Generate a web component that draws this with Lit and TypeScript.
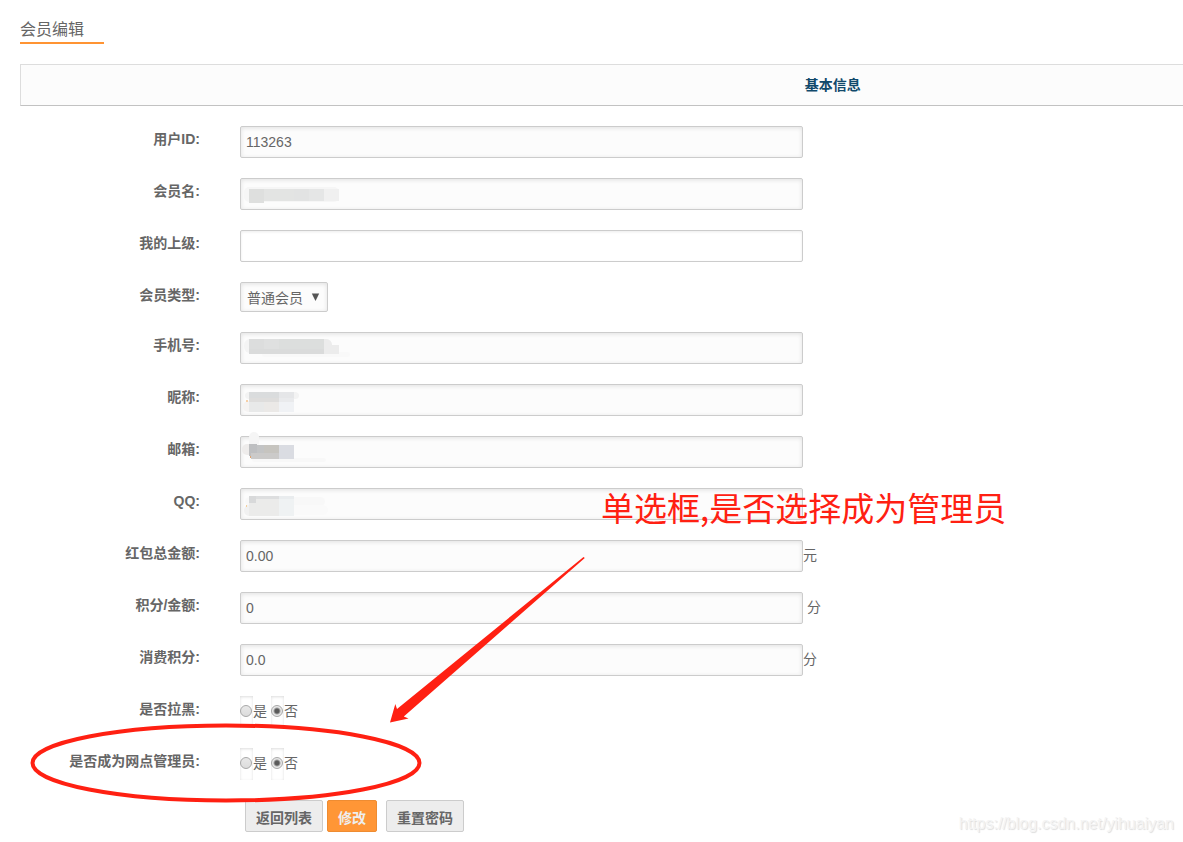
import { LitElement, html, svg, css, nothing, TemplateResult } from "lit";
import { customElement, property } from "lit/decorators.js";

type Block = [x: number, y: number, w: number, h: number, fill: string, r?: number];

interface TextRow {
  kind: "text";
  id: string;
  label: string;
  value?: string;
  editable?: boolean;
  unit?: string;
  spaced?: boolean;
  mask?: Block[];
}
interface SelectRow {
  kind: "select";
  id: string;
  label: string;
  options: string[];
}
interface RadioRow {
  kind: "radio";
  id: string;
  label: string;
}
type Row = TextRow | SelectRow | RadioRow;

/* Privacy mosaics laid over personal values. */
const NAME_MASK: Block[] = [
  [4, 9, 95, 15, "#f6f6f6", 5],
  [9, 11, 15, 14, "#dedfde"],
  [24, 11, 30, 12, "#e3e4e3"],
  [54, 11, 15, 12, "#e2e3e3"],
  [69, 11, 15, 12, "#e5e6e6"],
  [84, 11, 15, 12, "#f0f0f0"],
];
const PHONE_MASK: Block[] = [
  [4, 7, 88, 14, "#f4f4f4", 6],
  [22, 20, 88, 5, "#f9f9f9", 2],
  [70, 7, 22, 14, "#ececec", 6],
  [84, 13, 15, 9, "#ececec"],
  [9, 7, 15, 10, "#dcdddd"],
  [24, 7, 15, 10, "#dfe0e0"],
  [39, 7, 45, 10, "#dcdedd"],
  [9, 17, 75, 5, "#dadbdb"],
];
const NICK_MASK: Block[] = [
  [5, 8, 54, 7, "#f3f3f3", 4],
  [3, 17, 14, 11, "#f5f3f2", 5],
  [6, 16, 2, 2, "#f6cfa6"],
  [9, 8, 30, 6, "#dadcdd"],
  [39, 8, 15, 6, "#e5e6e8"],
  [9, 14, 30, 4, "#dedddc"],
  [39, 14, 15, 4, "#e9eaec"],
  [9, 18, 15, 10, "#e8e9e9"],
  [24, 18, 15, 10, "#ebe9e7"],
  [39, 18, 15, 10, "#f0f2f5"],
];
const MAIL_MASK: Block[] = [
  [9, -4, 10, 16, "#f5f5f5", 5],
  [2, 8, 14, 11, "#eeeceb", 5],
  [12, 22, 74, 4, "#f8f8f8", 2],
  [9, 8, 8, 12, "#bebfc1"],
  [17, 9, 7, 14, "#c3c4c5"],
  [24, 9, 15, 14, "#c6c4bf"],
  [11, 17, 28, 6, "#cbcac9"],
  [39, 9, 15, 14, "#dadce2"],
  [10, 20, 1, 2, "#dfa673"],
];
const QQ_MASK: Block[] = [
  [5, 9, 80, 9, "#f8f8f8", 5],
  [4, 17, 84, 10, "#fafafa", 5],
  [4, 17, 14, 11, "#f1f1f1", 5],
  [6, 17, 1, 2, "#f5cf9c"],
  [9, 8, 30, 20, "#ebebea"],
  [9, 8, 30, 3, "#dddedf"],
  [9, 8, 7, 7, "#d8d9da"],
  [39, 8, 15, 20, "#eff2f3"],
  [39, 8, 15, 3, "#e9ecee"],
];

const ROWS: Row[] = [
  { kind: "text", id: "uid", label: "用户ID:", value: "113263" },
  { kind: "text", id: "name", label: "会员名:", mask: NAME_MASK },
  { kind: "text", id: "parent", label: "我的上级:", editable: true },
  { kind: "select", id: "type", label: "会员类型:", options: ["普通会员"] },
  { kind: "text", id: "phone", label: "手机号:", mask: PHONE_MASK },
  { kind: "text", id: "nick", label: "昵称:", mask: NICK_MASK },
  { kind: "text", id: "mail", label: "邮箱:", mask: MAIL_MASK },
  { kind: "text", id: "qq", label: "QQ:", mask: QQ_MASK },
  { kind: "text", id: "bonus", label: "红包总金额:", value: "0.00", unit: "元" },
  { kind: "text", id: "points", label: "积分/金额:", value: "0", unit: "分", spaced: true },
  { kind: "text", id: "spent", label: "消费积分:", value: "0.0", unit: "分" },
  { kind: "radio", id: "blocked", label: "是否拉黑:" },
  { kind: "radio", id: "manager", label: "是否成为网点管理员:" },
];

@customElement("member-row")
class MemberRow extends LitElement {
  @property({ attribute: false }) row!: Row;

  static styles = css`
    :host {
      display: grid;
      grid-template-columns: 200px minmax(0, 1fr);
      column-gap: 40px;
      align-items: start;
      color: #666;
      font-size: 14px;
    }
    .label {
      text-align: right;
      font-weight: bold;
      line-height: 26px;
    }
    .line {
      display: flex;
      align-items: center;
    }
    .field {
      position: relative;
      flex: 0 1 563px;
      min-width: 0;
      display: flex;
    }
    .text,
    .select {
      box-sizing: border-box;
      margin: 0;
      border: 1px solid #ccc;
      border-radius: 2px;
      font: inherit;
      color: #666;
      box-shadow: inset 0 1px 4px #e0e0e0;
      outline: none;
    }
    .text {
      width: 100%;
      height: 32px;
      padding: 0 5px;
      background: #fcfcfc;
    }
    .editable {
      background: #fff;
      box-shadow: inset 0 1px 3px #ececec;
    }
    .mask {
      position: absolute;
      left: 0;
      top: 0;
      overflow: visible;
      pointer-events: none;
    }
    .unit {
      padding-bottom: 2px;
      line-height: 30px;
    }
    .spaced {
      padding-left: 4px;
    }
    .picker {
      position: relative;
      display: flex;
    }
    .select {
      appearance: none;
      width: 88px;
      height: 30px;
      padding: 2px 20px 0 6px;
      background: #fcfcfc;
    }
    .arrow {
      position: absolute;
      right: 8px;
      top: 11px;
      pointer-events: none;
    }
    .radios {
      display: flex;
      gap: 4px;
      margin: 0;
      padding: 0;
      border: 0;
    }
    .choice {
      display: flex;
      line-height: 30px;
    }
    .radio {
      appearance: none;
      box-sizing: border-box;
      width: 13px;
      height: 32px;
      margin: 0;
      padding-top: 9px;
      box-shadow: inset 0 1px 3px #ddd;
    }
    .radio::before {
      content: "";
      display: block;
      box-sizing: border-box;
      width: 12px;
      height: 12px;
      border: 1px solid #a8a8a8;
      border-radius: 50%;
      background: linear-gradient(#e8e8e8, #dcdcdc);
    }
    .radio:checked::before {
      background: radial-gradient(circle, #5a5a5a 0 2px, #e8e8e8 4px);
    }
  `;

  private renderMask(blocks: Block[]) {
    return html`<svg class="mask" width="112" height="32" aria-hidden="true">
      ${blocks.map(
        ([x, y, w, h, fill, r]) =>
          svg`<rect x=${x} y=${y} width=${w} height=${h} rx=${r ?? 0} fill=${fill}></rect>`
      )}
    </svg>`;
  }

  private renderControl(row: Row): TemplateResult {
    if (row.kind === "select") {
      return html`<div class="line">
        <span class="picker">
          <select class="select" id=${row.id}>
            ${row.options.map((o) => html`<option>${o}</option>`)}
          </select>
          <svg class="arrow" width="9" height="8" viewBox="0 0 9 8" aria-hidden="true">
            <path d="M0.8 0.5h7.4L4.5 8z" fill="#555"></path>
          </svg>
        </span>
      </div>`;
    }
    if (row.kind === "radio") {
      return html`<div class="radios" role="radiogroup" aria-labelledby=${row.id}>
        <label class="choice"><input class="radio" type="radio" name=${row.id} value="1" />是</label>
        <label class="choice"><input class="radio" type="radio" name=${row.id} value="0" checked />否</label>
      </div>`;
    }
    return html`<div class="line">
      <div class="field">
        <input
          class="text ${row.editable ? "editable" : ""}"
          id=${row.id}
          type="text"
          .value=${row.value ?? ""}
          ?readonly=${!row.editable}
        />
        ${row.mask ? this.renderMask(row.mask) : nothing}
      </div>
      ${row.unit ? html`<span class="unit ${row.spaced ? "spaced" : ""}">${row.unit}</span>` : nothing}
    </div>`;
  }

  render() {
    const row = this.row;
    return html`
      ${row.kind === "radio"
        ? html`<span class="label" id=${row.id}>${row.label}</span>`
        : html`<label class="label" for=${row.id}>${row.label}</label>`}
      ${this.renderControl(row)}
    `;
  }
}

@customElement("app-root")
class AppRoot extends LitElement {
  static styles = css`
    :host {
      display: block;
      position: relative;
      box-sizing: border-box;
      min-height: 100vh;
      padding-bottom: 10px;
      overflow: hidden;
      background: #fff;
      color: #666;
      font-family: "Liberation Sans", "Noto Sans CJK SC", sans-serif;
      font-size: 14px;
    }
    .head {
      display: flex;
      padding: 19px 20px 20px;
    }
    .title {
      margin: 0;
      padding: 0 20px 1px 0;
      border-bottom: 2px solid #ff9433;
      font-size: 16px;
      font-weight: normal;
      line-height: 22px;
    }
    .section {
      margin: 0 0 20px 20px;
      padding-left: 39%;
      border: 1px solid #ddd;
      border-bottom-color: #c2c2c2;
      border-right: 0;
      background: #fcfcfc;
      color: #10496b;
      font-size: 14px;
      line-height: 40px;
      text-align: center;
    }
    .form {
      display: flex;
      flex-direction: column;
      gap: 20px;
    }
    .actions {
      display: flex;
      gap: 4px;
      padding-left: 245px;
    }
    .button {
      box-sizing: border-box;
      height: 32px;
      margin: 0;
      padding: 2px 10px 0;
      border: 1px solid #ccc;
      border-radius: 2px;
      background: #ededed;
      color: #666;
      font: inherit;
      font-weight: bold;
    }
    .primary {
      margin-right: 5px;
      border-color: #ee8c32;
      background: #ff9636;
      color: #eee;
    }
    .marks {
      position: absolute;
      left: 0;
      top: 0;
      pointer-events: none;
    }
    .note {
      position: absolute;
      left: 601px;
      top: 487px;
      margin: 0;
      color: #ff2012;
      font-family: "Noto Sans CJK SC", sans-serif;
      font-size: 33px;
      line-height: 40px;
      white-space: nowrap;
      pointer-events: none;
    }
    .watermark {
      position: absolute;
      right: 9px;
      bottom: 8px;
      color: #f4f4f4;
      font-size: 16px;
      line-height: 20px;
      text-shadow: 1px 1px 1px #ddd;
      pointer-events: none;
    }
  `;

  render() {
    return html`
      <header class="head"><h1 class="title">会员编辑</h1></header>
      <h2 class="section">基本信息</h2>
      <form class="form" @submit=${(e: Event) => e.preventDefault()}>
        ${ROWS.map((row) => html`<member-row .row=${row}></member-row>`)}
        <div class="actions">
          <button class="button" type="button">返回列表</button>
          <button class="button primary" type="submit">修改</button>
          <button class="button" type="button">重置密码</button>
        </div>
      </form>
      <svg class="marks" width="620" height="820" aria-hidden="true">
        <ellipse cx="226" cy="763" rx="193.5" ry="37.5" fill="none" stroke="#ff2012" stroke-width="4"></ellipse>
        <path d="M390 722.5L395.3 704L397 709L583.5 557L584.8 558L403.8 716.5L408.5 718.5Z" fill="#ff2012"></path>
      </svg>
      <p class="note">单选框,是否选择成为管理员</p>
      <span class="watermark">https://blog.csdn.net/yihuaiyan</span>
    `;
  }
}
